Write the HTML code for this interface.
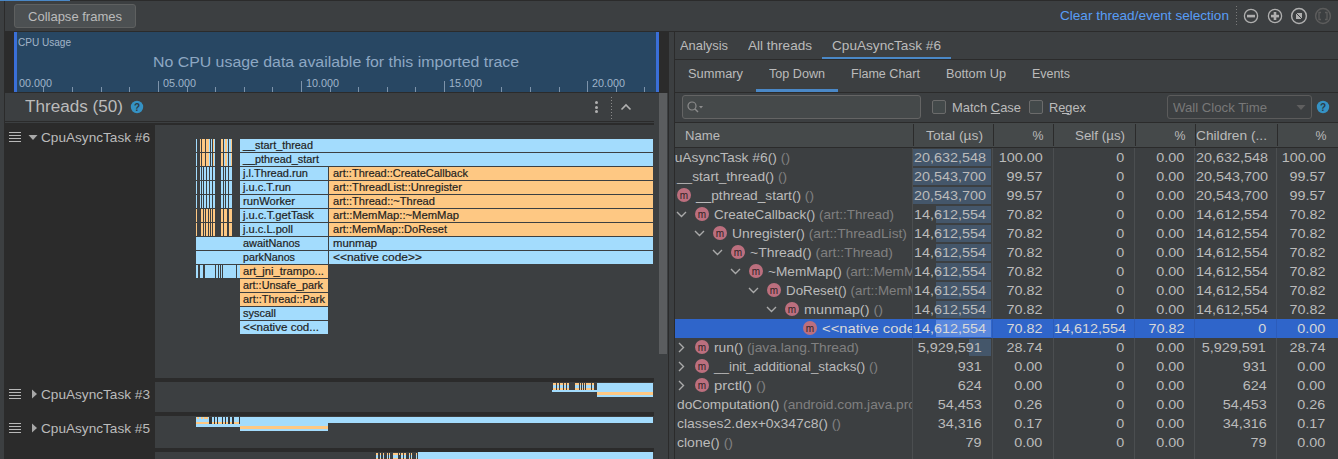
<!DOCTYPE html>
<html><head><meta charset="utf-8">
<style>
*{box-sizing:border-box;margin:0;padding:0}
html,body{width:1338px;height:459px;overflow:hidden;background:#3c3f41;font-family:"Liberation Sans",sans-serif;color:#bbbbbb;position:relative}
.a{position:absolute}
.t{position:absolute;white-space:pre;line-height:1;transform-origin:0 0}
</style></head><body>
<div class="a" style="left:0px;top:0px;width:1338px;height:1px;background:#2b2b2b;"></div>
<div class="a" style="left:0px;top:0px;width:70px;height:1px;background:#4a88c7;"></div>
<div class="a" style="left:4px;top:1px;width:1px;height:458px;background:#2b2b2b;"></div>
<div class="a" style="left:5px;top:31px;width:1333px;height:1px;background:#2b2b2b;"></div>
<div class="a" style="left:14px;top:4px;width:122px;height:24px;background:#4c5052;border:1px solid #5e6060;border-radius:3px;"></div>
<div class="t" style="left:28px;top:10px;font-size:13px;color:#bbbbbb;transform:scaleX(1.0005);">Collapse frames</div>
<div class="a" style="left:5px;top:32px;width:664px;height:61px;background:#2b2b2b;"></div>
<div class="a" style="left:14px;top:32px;width:645px;height:60px;background:#284763;"></div>
<div class="a" style="left:14px;top:32px;width:3px;height:60px;background:#3a6fd8;"></div>
<div class="a" style="left:656px;top:32px;width:3px;height:60px;background:#3a6fd8;"></div>
<div class="a" style="left:5px;top:92px;width:650px;height:1px;background:#2b2b2b;"></div>
<div class="t" style="left:18px;top:37px;font-size:11px;color:#a3b5c8;transform:scaleX(0.9123);">CPU Usage</div>
<div class="t" style="left:153px;top:55px;font-size:14px;color:#8ea8c3;transform:scaleX(1.1337);">No CPU usage data available for this imported trace</div>
<div class="a" style="left:43px;top:87px;width:1px;height:5px;background:#7d93aa;"></div>
<div class="a" style="left:72px;top:87px;width:1px;height:5px;background:#7d93aa;"></div>
<div class="a" style="left:101px;top:87px;width:1px;height:5px;background:#7d93aa;"></div>
<div class="a" style="left:129px;top:87px;width:1px;height:5px;background:#7d93aa;"></div>
<div class="a" style="left:158px;top:81px;width:1px;height:11px;background:#7d93aa;"></div>
<div class="a" style="left:187px;top:87px;width:1px;height:5px;background:#7d93aa;"></div>
<div class="a" style="left:215px;top:87px;width:1px;height:5px;background:#7d93aa;"></div>
<div class="a" style="left:244px;top:87px;width:1px;height:5px;background:#7d93aa;"></div>
<div class="a" style="left:272px;top:87px;width:1px;height:5px;background:#7d93aa;"></div>
<div class="a" style="left:301px;top:81px;width:1px;height:11px;background:#7d93aa;"></div>
<div class="a" style="left:330px;top:87px;width:1px;height:5px;background:#7d93aa;"></div>
<div class="a" style="left:358px;top:87px;width:1px;height:5px;background:#7d93aa;"></div>
<div class="a" style="left:387px;top:87px;width:1px;height:5px;background:#7d93aa;"></div>
<div class="a" style="left:415px;top:87px;width:1px;height:5px;background:#7d93aa;"></div>
<div class="a" style="left:444px;top:81px;width:1px;height:11px;background:#7d93aa;"></div>
<div class="a" style="left:473px;top:87px;width:1px;height:5px;background:#7d93aa;"></div>
<div class="a" style="left:501px;top:87px;width:1px;height:5px;background:#7d93aa;"></div>
<div class="a" style="left:530px;top:87px;width:1px;height:5px;background:#7d93aa;"></div>
<div class="a" style="left:559px;top:87px;width:1px;height:5px;background:#7d93aa;"></div>
<div class="a" style="left:587px;top:81px;width:1px;height:11px;background:#7d93aa;"></div>
<div class="a" style="left:616px;top:87px;width:1px;height:5px;background:#7d93aa;"></div>
<div class="a" style="left:644px;top:87px;width:1px;height:5px;background:#7d93aa;"></div>
<div class="t" style="left:19px;top:78px;font-size:11px;color:#9fb4ca;transform:scaleX(0.9796);">00.000</div>
<div class="t" style="left:163px;top:78px;font-size:11px;color:#9fb4ca;transform:scaleX(0.9796);">05.000</div>
<div class="t" style="left:306px;top:78px;font-size:11px;color:#9fb4ca;transform:scaleX(0.9796);">10.000</div>
<div class="t" style="left:449px;top:78px;font-size:11px;color:#9fb4ca;transform:scaleX(0.9796);">15.000</div>
<div class="t" style="left:592px;top:78px;font-size:11px;color:#9fb4ca;transform:scaleX(0.9796);">20.000</div>
<div class="a" style="left:5px;top:121px;width:649px;height:1px;background:#2b2b2b;"></div>
<div class="a" style="left:5px;top:123px;width:649px;height:1px;background:#2b2b2b;"></div>
<div class="t" style="left:25px;top:99px;font-size:16px;color:#bbbbbb;transform:scaleX(1.0692);">Threads (50)</div>
<svg class="a" style="left:130px;top:100px" width="14" height="14"><circle cx="7" cy="7" r="6.2" fill="#3592c4"/><text x="7" y="11" font-family="Liberation Sans" font-size="10" font-weight="bold" text-anchor="middle" fill="#2b3c48">?</text></svg>
<div class="a" style="left:594.5px;top:100.5px;width:3px;height:3px;border-radius:50%;background:#b0b0b0"></div>
<div class="a" style="left:594.5px;top:105.5px;width:3px;height:3px;border-radius:50%;background:#b0b0b0"></div>
<div class="a" style="left:594.5px;top:109.5px;width:3px;height:3px;border-radius:50%;background:#b0b0b0"></div>
<div class="a" style="left:611px;top:97px;width:1px;height:1px;background:#8a8a8a;"></div>
<div class="a" style="left:611px;top:100px;width:1px;height:1px;background:#8a8a8a;"></div>
<div class="a" style="left:611px;top:103px;width:1px;height:1px;background:#8a8a8a;"></div>
<div class="a" style="left:611px;top:106px;width:1px;height:1px;background:#8a8a8a;"></div>
<div class="a" style="left:611px;top:109px;width:1px;height:1px;background:#8a8a8a;"></div>
<div class="a" style="left:611px;top:112px;width:1px;height:1px;background:#8a8a8a;"></div>
<div class="a" style="left:611px;top:115px;width:1px;height:1px;background:#8a8a8a;"></div>
<div class="a" style="left:611px;top:118px;width:1px;height:1px;background:#8a8a8a;"></div>
<svg class="a" style="left:620px;top:102px" width="12" height="10"><polyline points="1.5,7.5 6,3 10.5,7.5" fill="none" stroke="#b0b0b0" stroke-width="1.6"/></svg>
<div class="a" style="left:5px;top:124px;width:650px;height:335px;background:#2b2b2b;"></div>
<div class="a" style="left:155px;top:125px;width:499px;height:253px;background:#3c3f41;"></div>
<div class="a" style="left:155px;top:382px;width:499px;height:30px;background:#3c3f41;"></div>
<div class="a" style="left:155px;top:416px;width:499px;height:32px;background:#3c3f41;"></div>
<div class="a" style="left:155px;top:452px;width:499px;height:7px;background:#3c3f41;"></div>
<div class="a" style="left:9px;top:132px;width:12px;height:1px;background:#b8b8b8;"></div>
<div class="a" style="left:9px;top:135px;width:12px;height:1px;background:#b8b8b8;"></div>
<div class="a" style="left:9px;top:138px;width:12px;height:1px;background:#b8b8b8;"></div>
<div class="a" style="left:9px;top:141px;width:12px;height:1px;background:#b8b8b8;"></div>
<div class="a" style="left:9px;top:389px;width:12px;height:1px;background:#b8b8b8;"></div>
<div class="a" style="left:9px;top:392px;width:12px;height:1px;background:#b8b8b8;"></div>
<div class="a" style="left:9px;top:395px;width:12px;height:1px;background:#b8b8b8;"></div>
<div class="a" style="left:9px;top:398px;width:12px;height:1px;background:#b8b8b8;"></div>
<div class="a" style="left:9px;top:423px;width:12px;height:1px;background:#b8b8b8;"></div>
<div class="a" style="left:9px;top:426px;width:12px;height:1px;background:#b8b8b8;"></div>
<div class="a" style="left:9px;top:429px;width:12px;height:1px;background:#b8b8b8;"></div>
<div class="a" style="left:9px;top:432px;width:12px;height:1px;background:#b8b8b8;"></div>
<svg class="a" style="left:28px;top:134px" width="10" height="7"><polygon points="0.5,1 9.5,1 5,6" fill="#a8a8a8"/></svg>
<svg class="a" style="left:31px;top:389px" width="7" height="10"><polygon points="1,0.5 6,5 1,9.5" fill="#a8a8a8"/></svg>
<svg class="a" style="left:31px;top:423px" width="7" height="10"><polygon points="1,0.5 6,5 1,9.5" fill="#a8a8a8"/></svg>
<div class="t" style="left:41px;top:131px;font-size:13px;color:#bbbbbb;transform:scaleX(1.0473);">CpuAsyncTask #6</div>
<div class="t" style="left:41px;top:388px;font-size:13px;color:#bbbbbb;transform:scaleX(1.0473);">CpuAsyncTask #3</div>
<div class="t" style="left:41px;top:422px;font-size:13px;color:#bbbbbb;transform:scaleX(1.0473);">CpuAsyncTask #5</div>
<div class="a" style="left:196px;top:139px;width:1px;height:13px;background:#a3dcfd;"></div>
<div class="a" style="left:200px;top:139px;width:1px;height:13px;background:#fec883;"></div>
<div class="a" style="left:202px;top:139px;width:3px;height:13px;background:#fec883;"></div>
<div class="a" style="left:206px;top:139px;width:3px;height:13px;background:#fec883;"></div>
<div class="a" style="left:209px;top:139px;width:1px;height:13px;background:#a3dcfd;"></div>
<div class="a" style="left:211px;top:139px;width:1px;height:13px;background:#a3dcfd;"></div>
<div class="a" style="left:213px;top:139px;width:1px;height:13px;background:#fec883;"></div>
<div class="a" style="left:214px;top:139px;width:1px;height:13px;background:#a3dcfd;"></div>
<div class="a" style="left:221px;top:139px;width:2px;height:13px;background:#fec883;"></div>
<div class="a" style="left:224px;top:139px;width:1px;height:13px;background:#a3dcfd;"></div>
<div class="a" style="left:225px;top:139px;width:2px;height:13px;background:#fec883;"></div>
<div class="a" style="left:227px;top:139px;width:1px;height:13px;background:#a3dcfd;"></div>
<div class="a" style="left:229px;top:139px;width:2px;height:13px;background:#a3dcfd;"></div>
<div class="a" style="left:231px;top:139px;width:1px;height:13px;background:#fec883;"></div>
<div class="a" style="left:196px;top:153px;width:1px;height:13px;background:#a3dcfd;"></div>
<div class="a" style="left:200px;top:153px;width:1px;height:13px;background:#fec883;"></div>
<div class="a" style="left:202px;top:153px;width:3px;height:13px;background:#fec883;"></div>
<div class="a" style="left:206px;top:153px;width:3px;height:13px;background:#fec883;"></div>
<div class="a" style="left:209px;top:153px;width:1px;height:13px;background:#a3dcfd;"></div>
<div class="a" style="left:211px;top:153px;width:1px;height:13px;background:#a3dcfd;"></div>
<div class="a" style="left:213px;top:153px;width:1px;height:13px;background:#fec883;"></div>
<div class="a" style="left:214px;top:153px;width:1px;height:13px;background:#a3dcfd;"></div>
<div class="a" style="left:221px;top:153px;width:2px;height:13px;background:#fec883;"></div>
<div class="a" style="left:224px;top:153px;width:1px;height:13px;background:#a3dcfd;"></div>
<div class="a" style="left:225px;top:153px;width:2px;height:13px;background:#fec883;"></div>
<div class="a" style="left:227px;top:153px;width:1px;height:13px;background:#a3dcfd;"></div>
<div class="a" style="left:229px;top:153px;width:2px;height:13px;background:#a3dcfd;"></div>
<div class="a" style="left:231px;top:153px;width:1px;height:13px;background:#fec883;"></div>
<div class="a" style="left:196px;top:167px;width:1px;height:13px;background:#a3dcfd;"></div>
<div class="a" style="left:200px;top:167px;width:1px;height:13px;background:#a3dcfd;"></div>
<div class="a" style="left:202px;top:167px;width:1px;height:13px;background:#a3dcfd;"></div>
<div class="a" style="left:204px;top:167px;width:2px;height:13px;background:#a3dcfd;"></div>
<div class="a" style="left:207px;top:167px;width:2px;height:13px;background:#a3dcfd;"></div>
<div class="a" style="left:210px;top:167px;width:1px;height:13px;background:#a3dcfd;"></div>
<div class="a" style="left:211px;top:167px;width:1px;height:13px;background:#a3dcfd;"></div>
<div class="a" style="left:213px;top:167px;width:2px;height:13px;background:#a3dcfd;"></div>
<div class="a" style="left:221px;top:167px;width:2px;height:13px;background:#a3dcfd;"></div>
<div class="a" style="left:224px;top:167px;width:1px;height:13px;background:#a3dcfd;"></div>
<div class="a" style="left:226px;top:167px;width:2px;height:13px;background:#a3dcfd;"></div>
<div class="a" style="left:229px;top:167px;width:3px;height:13px;background:#a3dcfd;"></div>
<div class="a" style="left:196px;top:181px;width:1px;height:13px;background:#a3dcfd;"></div>
<div class="a" style="left:200px;top:181px;width:1px;height:13px;background:#a3dcfd;"></div>
<div class="a" style="left:202px;top:181px;width:1px;height:13px;background:#a3dcfd;"></div>
<div class="a" style="left:204px;top:181px;width:2px;height:13px;background:#a3dcfd;"></div>
<div class="a" style="left:207px;top:181px;width:2px;height:13px;background:#a3dcfd;"></div>
<div class="a" style="left:210px;top:181px;width:1px;height:13px;background:#a3dcfd;"></div>
<div class="a" style="left:211px;top:181px;width:1px;height:13px;background:#a3dcfd;"></div>
<div class="a" style="left:213px;top:181px;width:2px;height:13px;background:#a3dcfd;"></div>
<div class="a" style="left:221px;top:181px;width:2px;height:13px;background:#a3dcfd;"></div>
<div class="a" style="left:224px;top:181px;width:1px;height:13px;background:#a3dcfd;"></div>
<div class="a" style="left:226px;top:181px;width:2px;height:13px;background:#a3dcfd;"></div>
<div class="a" style="left:229px;top:181px;width:3px;height:13px;background:#a3dcfd;"></div>
<div class="a" style="left:196px;top:195px;width:1px;height:13px;background:#a3dcfd;"></div>
<div class="a" style="left:200px;top:195px;width:1px;height:13px;background:#a3dcfd;"></div>
<div class="a" style="left:202px;top:195px;width:1px;height:13px;background:#a3dcfd;"></div>
<div class="a" style="left:204px;top:195px;width:2px;height:13px;background:#a3dcfd;"></div>
<div class="a" style="left:207px;top:195px;width:2px;height:13px;background:#a3dcfd;"></div>
<div class="a" style="left:210px;top:195px;width:1px;height:13px;background:#a3dcfd;"></div>
<div class="a" style="left:211px;top:195px;width:1px;height:13px;background:#a3dcfd;"></div>
<div class="a" style="left:213px;top:195px;width:2px;height:13px;background:#a3dcfd;"></div>
<div class="a" style="left:221px;top:195px;width:2px;height:13px;background:#a3dcfd;"></div>
<div class="a" style="left:224px;top:195px;width:1px;height:13px;background:#a3dcfd;"></div>
<div class="a" style="left:226px;top:195px;width:2px;height:13px;background:#a3dcfd;"></div>
<div class="a" style="left:229px;top:195px;width:3px;height:13px;background:#a3dcfd;"></div>
<div class="a" style="left:196px;top:209px;width:1px;height:13px;background:#fec883;"></div>
<div class="a" style="left:201px;top:209px;width:2px;height:13px;background:#fec883;"></div>
<div class="a" style="left:204px;top:209px;width:1px;height:13px;background:#fec883;"></div>
<div class="a" style="left:206px;top:209px;width:2px;height:13px;background:#fec883;"></div>
<div class="a" style="left:209px;top:209px;width:1px;height:13px;background:#fec883;"></div>
<div class="a" style="left:211px;top:209px;width:1px;height:13px;background:#fec883;"></div>
<div class="a" style="left:213px;top:209px;width:2px;height:13px;background:#fec883;"></div>
<div class="a" style="left:221px;top:209px;width:2px;height:13px;background:#fec883;"></div>
<div class="a" style="left:224px;top:209px;width:3px;height:13px;background:#fec883;"></div>
<div class="a" style="left:229px;top:209px;width:3px;height:13px;background:#fec883;"></div>
<div class="a" style="left:196px;top:223px;width:1px;height:13px;background:#fec883;"></div>
<div class="a" style="left:201px;top:223px;width:2px;height:13px;background:#fec883;"></div>
<div class="a" style="left:204px;top:223px;width:1px;height:13px;background:#fec883;"></div>
<div class="a" style="left:206px;top:223px;width:2px;height:13px;background:#fec883;"></div>
<div class="a" style="left:209px;top:223px;width:1px;height:13px;background:#fec883;"></div>
<div class="a" style="left:211px;top:223px;width:1px;height:13px;background:#fec883;"></div>
<div class="a" style="left:213px;top:223px;width:2px;height:13px;background:#fec883;"></div>
<div class="a" style="left:221px;top:223px;width:2px;height:13px;background:#fec883;"></div>
<div class="a" style="left:224px;top:223px;width:3px;height:13px;background:#fec883;"></div>
<div class="a" style="left:229px;top:223px;width:3px;height:13px;background:#fec883;"></div>
<div class="a" style="left:240px;top:139px;width:413px;height:13px;background:#a3dcfd;"></div>
<div class="t" style="left:243px;top:140px;font-size:11px;color:#1e1e1e;transform:scaleX(0.9859);-webkit-text-stroke:0.2px #1e1e1e;">__start_thread</div>
<div class="a" style="left:240px;top:153px;width:413px;height:13px;background:#a3dcfd;"></div>
<div class="t" style="left:243px;top:154px;font-size:11px;color:#1e1e1e;transform:scaleX(0.9854);-webkit-text-stroke:0.2px #1e1e1e;">__pthread_start</div>
<div class="a" style="left:240px;top:167px;width:88px;height:13px;background:#a3dcfd;"></div>
<div class="t" style="left:243px;top:168px;font-size:11px;color:#1e1e1e;transform:scaleX(1.0024);-webkit-text-stroke:0.2px #1e1e1e;">j.l.Thread.run</div>
<div class="a" style="left:329px;top:167px;width:324px;height:13px;background:#fec883;"></div>
<div class="t" style="left:333px;top:168px;font-size:11px;color:#1e1e1e;transform:scaleX(0.9986);-webkit-text-stroke:0.2px #1e1e1e;">art::Thread::CreateCallback</div>
<div class="a" style="left:240px;top:181px;width:88px;height:13px;background:#a3dcfd;"></div>
<div class="t" style="left:243px;top:182px;font-size:11px;color:#1e1e1e;transform:scaleX(1.0059);-webkit-text-stroke:0.2px #1e1e1e;">j.u.c.T.run</div>
<div class="a" style="left:329px;top:181px;width:324px;height:13px;background:#fec883;"></div>
<div class="t" style="left:333px;top:182px;font-size:11px;color:#1e1e1e;transform:scaleX(1.0090);-webkit-text-stroke:0.2px #1e1e1e;">art::ThreadList::Unregister</div>
<div class="a" style="left:240px;top:195px;width:88px;height:13px;background:#a3dcfd;"></div>
<div class="t" style="left:243px;top:196px;font-size:11px;color:#1e1e1e;transform:scaleX(1.0168);-webkit-text-stroke:0.2px #1e1e1e;">runWorker</div>
<div class="a" style="left:329px;top:195px;width:324px;height:13px;background:#fec883;"></div>
<div class="t" style="left:333px;top:196px;font-size:11px;color:#1e1e1e;transform:scaleX(1.0073);-webkit-text-stroke:0.2px #1e1e1e;">art::Thread::~Thread</div>
<div class="a" style="left:240px;top:209px;width:88px;height:13px;background:#a3dcfd;"></div>
<div class="t" style="left:243px;top:210px;font-size:11px;color:#1e1e1e;transform:scaleX(1.0179);-webkit-text-stroke:0.2px #1e1e1e;">j.u.c.T.getTask</div>
<div class="a" style="left:329px;top:209px;width:324px;height:13px;background:#fec883;"></div>
<div class="t" style="left:333px;top:210px;font-size:11px;color:#1e1e1e;transform:scaleX(1.0227);-webkit-text-stroke:0.2px #1e1e1e;">art::MemMap::~MemMap</div>
<div class="a" style="left:240px;top:223px;width:88px;height:13px;background:#a3dcfd;"></div>
<div class="t" style="left:243px;top:224px;font-size:11px;color:#1e1e1e;transform:scaleX(1.0088);-webkit-text-stroke:0.2px #1e1e1e;">j.u.c.L.poll</div>
<div class="a" style="left:329px;top:223px;width:324px;height:13px;background:#fec883;"></div>
<div class="t" style="left:333px;top:224px;font-size:11px;color:#1e1e1e;transform:scaleX(1.0022);-webkit-text-stroke:0.2px #1e1e1e;">art::MemMap::DoReset</div>
<div class="a" style="left:196px;top:237px;width:132px;height:13px;background:#a3dcfd;"></div>
<div class="t" style="left:243px;top:238px;font-size:11px;color:#1e1e1e;transform:scaleX(0.9913);-webkit-text-stroke:0.2px #1e1e1e;">awaitNanos</div>
<div class="a" style="left:329px;top:237px;width:324px;height:13px;background:#a3dcfd;"></div>
<div class="t" style="left:333px;top:238px;font-size:11px;color:#1e1e1e;transform:scaleX(1.0277);-webkit-text-stroke:0.2px #1e1e1e;">munmap</div>
<div class="a" style="left:196px;top:251px;width:132px;height:13px;background:#a3dcfd;"></div>
<div class="t" style="left:243px;top:252px;font-size:11px;color:#1e1e1e;transform:scaleX(0.9771);-webkit-text-stroke:0.2px #1e1e1e;">parkNanos</div>
<div class="a" style="left:329px;top:251px;width:324px;height:13px;background:#a3dcfd;"></div>
<div class="t" style="left:333px;top:252px;font-size:11px;color:#1e1e1e;transform:scaleX(1.0854);-webkit-text-stroke:0.2px #1e1e1e;">&lt;&lt;native code&gt;&gt;</div>
<div class="a" style="left:196px;top:265px;width:2px;height:13px;background:#a3dcfd;"></div>
<div class="a" style="left:200px;top:265px;width:3px;height:13px;background:#a3dcfd;"></div>
<div class="a" style="left:205px;top:265px;width:10px;height:13px;background:#a3dcfd;"></div>
<div class="a" style="left:216px;top:265px;width:2px;height:13px;background:#a3dcfd;"></div>
<div class="a" style="left:219px;top:265px;width:1px;height:13px;background:#a3dcfd;"></div>
<div class="a" style="left:221px;top:265px;width:1px;height:13px;background:#a3dcfd;"></div>
<div class="a" style="left:223px;top:265px;width:13px;height:13px;background:#a3dcfd;"></div>
<div class="a" style="left:237px;top:265px;width:3px;height:13px;background:#a3dcfd;"></div>
<div class="a" style="left:240px;top:265px;width:88px;height:13px;background:#fec883;"></div>
<div class="t" style="left:243px;top:266px;font-size:11px;color:#1e1e1e;transform:scaleX(1.0185);-webkit-text-stroke:0.2px #1e1e1e;">art_jni_trampo...</div>
<div class="a" style="left:240px;top:279px;width:88px;height:13px;background:#fec883;"></div>
<div class="t" style="left:243px;top:280px;font-size:11px;color:#1e1e1e;transform:scaleX(0.9831);-webkit-text-stroke:0.2px #1e1e1e;">art::Unsafe_park</div>
<div class="a" style="left:240px;top:293px;width:88px;height:13px;background:#fec883;"></div>
<div class="t" style="left:243px;top:294px;font-size:11px;color:#1e1e1e;transform:scaleX(0.9928);-webkit-text-stroke:0.2px #1e1e1e;">art::Thread::Park</div>
<div class="a" style="left:240px;top:307px;width:88px;height:13px;background:#a3dcfd;"></div>
<div class="t" style="left:243px;top:308px;font-size:11px;color:#1e1e1e;transform:scaleX(1.0000);-webkit-text-stroke:0.2px #1e1e1e;">syscall</div>
<div class="a" style="left:240px;top:321px;width:88px;height:13px;background:#a3dcfd;"></div>
<div class="t" style="left:243px;top:322px;font-size:11px;color:#1e1e1e;transform:scaleX(1.0524);-webkit-text-stroke:0.2px #1e1e1e;">&lt;&lt;native cod...</div>
<div class="a" style="left:597px;top:383px;width:56px;height:9px;background:#a3dcfd;"></div>
<div class="a" style="left:597px;top:392px;width:56px;height:3px;background:#fec883;"></div>
<div class="a" style="left:597px;top:395px;width:56px;height:2px;background:#a3dcfd;"></div>
<div class="a" style="left:553px;top:383px;width:3px;height:2px;background:#fec883;"></div>
<div class="a" style="left:553px;top:385px;width:3px;height:3px;background:#a3dcfd;"></div>
<div class="a" style="left:553px;top:388px;width:3px;height:2px;background:#fec883;"></div>
<div class="a" style="left:557px;top:383px;width:2px;height:2px;background:#fec883;"></div>
<div class="a" style="left:557px;top:385px;width:2px;height:3px;background:#a3dcfd;"></div>
<div class="a" style="left:557px;top:388px;width:2px;height:2px;background:#fec883;"></div>
<div class="a" style="left:560px;top:383px;width:3px;height:2px;background:#fec883;"></div>
<div class="a" style="left:560px;top:385px;width:3px;height:3px;background:#a3dcfd;"></div>
<div class="a" style="left:560px;top:388px;width:3px;height:2px;background:#fec883;"></div>
<div class="a" style="left:564px;top:383px;width:2px;height:2px;background:#fec883;"></div>
<div class="a" style="left:564px;top:385px;width:2px;height:3px;background:#a3dcfd;"></div>
<div class="a" style="left:564px;top:388px;width:2px;height:2px;background:#fec883;"></div>
<div class="a" style="left:567px;top:383px;width:2px;height:2px;background:#fec883;"></div>
<div class="a" style="left:567px;top:385px;width:2px;height:3px;background:#a3dcfd;"></div>
<div class="a" style="left:567px;top:388px;width:2px;height:2px;background:#fec883;"></div>
<div class="a" style="left:575px;top:383px;width:4px;height:2px;background:#fec883;"></div>
<div class="a" style="left:575px;top:385px;width:4px;height:3px;background:#a3dcfd;"></div>
<div class="a" style="left:575px;top:388px;width:4px;height:2px;background:#fec883;"></div>
<div class="a" style="left:580px;top:383px;width:1px;height:2px;background:#fec883;"></div>
<div class="a" style="left:580px;top:385px;width:1px;height:3px;background:#a3dcfd;"></div>
<div class="a" style="left:580px;top:388px;width:1px;height:2px;background:#fec883;"></div>
<div class="a" style="left:582px;top:383px;width:1px;height:2px;background:#fec883;"></div>
<div class="a" style="left:582px;top:385px;width:1px;height:3px;background:#a3dcfd;"></div>
<div class="a" style="left:582px;top:388px;width:1px;height:2px;background:#fec883;"></div>
<div class="a" style="left:584px;top:383px;width:1px;height:2px;background:#fec883;"></div>
<div class="a" style="left:584px;top:385px;width:1px;height:3px;background:#a3dcfd;"></div>
<div class="a" style="left:584px;top:388px;width:1px;height:2px;background:#fec883;"></div>
<div class="a" style="left:586px;top:383px;width:5px;height:2px;background:#fec883;"></div>
<div class="a" style="left:586px;top:385px;width:5px;height:3px;background:#a3dcfd;"></div>
<div class="a" style="left:586px;top:388px;width:5px;height:2px;background:#fec883;"></div>
<div class="a" style="left:592px;top:383px;width:2px;height:2px;background:#fec883;"></div>
<div class="a" style="left:592px;top:385px;width:2px;height:3px;background:#a3dcfd;"></div>
<div class="a" style="left:592px;top:388px;width:2px;height:2px;background:#fec883;"></div>
<div class="a" style="left:552px;top:390px;width:45px;height:2px;background:#a3dcfd;"></div>
<div class="a" style="left:196px;top:417px;width:457px;height:6px;background:#a3dcfd;"></div>
<div class="a" style="left:196px;top:423px;width:44px;height:4px;background:#a3dcfd;"></div>
<div class="a" style="left:240px;top:423px;width:88px;height:8px;background:#a3dcfd;"></div>
<div class="a" style="left:240px;top:426px;width:88px;height:3px;background:#fec883;"></div>
<div class="a" style="left:196px;top:422px;width:13px;height:2px;background:#fec883;"></div>
<div class="a" style="left:197px;top:417px;width:2px;height:2px;background:#fec883;"></div>
<div class="a" style="left:201px;top:417px;width:2px;height:2px;background:#fec883;"></div>
<div class="a" style="left:204px;top:417px;width:4px;height:2px;background:#fec883;"></div>
<div class="a" style="left:209px;top:417px;width:31px;height:7px;background:#333537;"></div>
<div class="a" style="left:212px;top:417px;width:2px;height:5px;background:#a3dcfd;"></div>
<div class="a" style="left:212px;top:422px;width:2px;height:2px;background:#fec883;"></div>
<div class="a" style="left:215px;top:417px;width:2px;height:5px;background:#a3dcfd;"></div>
<div class="a" style="left:215px;top:422px;width:2px;height:2px;background:#fec883;"></div>
<div class="a" style="left:218px;top:417px;width:2px;height:5px;background:#a3dcfd;"></div>
<div class="a" style="left:218px;top:422px;width:2px;height:2px;background:#fec883;"></div>
<div class="a" style="left:220px;top:417px;width:2px;height:5px;background:#a3dcfd;"></div>
<div class="a" style="left:220px;top:422px;width:2px;height:2px;background:#fec883;"></div>
<div class="a" style="left:223px;top:417px;width:2px;height:5px;background:#a3dcfd;"></div>
<div class="a" style="left:223px;top:422px;width:2px;height:2px;background:#fec883;"></div>
<div class="a" style="left:226px;top:417px;width:2px;height:5px;background:#a3dcfd;"></div>
<div class="a" style="left:226px;top:422px;width:2px;height:2px;background:#fec883;"></div>
<div class="a" style="left:230px;top:417px;width:2px;height:5px;background:#a3dcfd;"></div>
<div class="a" style="left:230px;top:422px;width:2px;height:2px;background:#fec883;"></div>
<div class="a" style="left:234px;top:417px;width:2px;height:5px;background:#a3dcfd;"></div>
<div class="a" style="left:234px;top:422px;width:2px;height:2px;background:#fec883;"></div>
<div class="a" style="left:236px;top:417px;width:3px;height:5px;background:#a3dcfd;"></div>
<div class="a" style="left:236px;top:422px;width:3px;height:2px;background:#fec883;"></div>
<div class="a" style="left:418px;top:452px;width:235px;height:7px;background:#a3dcfd;"></div>
<div class="a" style="left:376px;top:453px;width:2px;height:2px;background:#fec883;"></div>
<div class="a" style="left:376px;top:455px;width:2px;height:3px;background:#a3dcfd;"></div>
<div class="a" style="left:376px;top:458px;width:2px;height:1px;background:#fec883;"></div>
<div class="a" style="left:380px;top:453px;width:1px;height:2px;background:#fec883;"></div>
<div class="a" style="left:380px;top:455px;width:1px;height:3px;background:#a3dcfd;"></div>
<div class="a" style="left:380px;top:458px;width:1px;height:1px;background:#fec883;"></div>
<div class="a" style="left:383px;top:453px;width:1px;height:2px;background:#fec883;"></div>
<div class="a" style="left:383px;top:455px;width:1px;height:3px;background:#a3dcfd;"></div>
<div class="a" style="left:383px;top:458px;width:1px;height:1px;background:#fec883;"></div>
<div class="a" style="left:387px;top:453px;width:1px;height:2px;background:#fec883;"></div>
<div class="a" style="left:387px;top:455px;width:1px;height:3px;background:#a3dcfd;"></div>
<div class="a" style="left:387px;top:458px;width:1px;height:1px;background:#fec883;"></div>
<div class="a" style="left:389px;top:453px;width:1px;height:2px;background:#fec883;"></div>
<div class="a" style="left:389px;top:455px;width:1px;height:3px;background:#a3dcfd;"></div>
<div class="a" style="left:389px;top:458px;width:1px;height:1px;background:#fec883;"></div>
<div class="a" style="left:393px;top:453px;width:5px;height:2px;background:#fec883;"></div>
<div class="a" style="left:393px;top:455px;width:5px;height:3px;background:#a3dcfd;"></div>
<div class="a" style="left:393px;top:458px;width:5px;height:1px;background:#fec883;"></div>
<div class="a" style="left:401px;top:453px;width:2px;height:2px;background:#fec883;"></div>
<div class="a" style="left:401px;top:455px;width:2px;height:3px;background:#a3dcfd;"></div>
<div class="a" style="left:401px;top:458px;width:2px;height:1px;background:#fec883;"></div>
<div class="a" style="left:404px;top:453px;width:2px;height:2px;background:#fec883;"></div>
<div class="a" style="left:404px;top:455px;width:2px;height:3px;background:#a3dcfd;"></div>
<div class="a" style="left:404px;top:458px;width:2px;height:1px;background:#fec883;"></div>
<div class="a" style="left:409px;top:453px;width:1px;height:2px;background:#fec883;"></div>
<div class="a" style="left:409px;top:455px;width:1px;height:3px;background:#a3dcfd;"></div>
<div class="a" style="left:409px;top:458px;width:1px;height:1px;background:#fec883;"></div>
<div class="a" style="left:411px;top:453px;width:1px;height:2px;background:#fec883;"></div>
<div class="a" style="left:411px;top:455px;width:1px;height:3px;background:#a3dcfd;"></div>
<div class="a" style="left:411px;top:458px;width:1px;height:1px;background:#fec883;"></div>
<div class="a" style="left:416px;top:453px;width:1px;height:2px;background:#fec883;"></div>
<div class="a" style="left:416px;top:455px;width:1px;height:3px;background:#a3dcfd;"></div>
<div class="a" style="left:416px;top:458px;width:1px;height:1px;background:#fec883;"></div>
<div class="a" style="left:399px;top:453px;width:1px;height:2px;background:#fec883;"></div>
<div class="a" style="left:654px;top:93px;width:5px;height:366px;background:#3c3f41;"></div>
<div class="a" style="left:659px;top:32px;width:9px;height:61px;background:#2b2b2b;"></div>
<div class="a" style="left:659px;top:93px;width:8px;height:261px;background:#5b5d5f;"></div>
<div class="a" style="left:659px;top:354px;width:9px;height:105px;background:#3c3f41;"></div>
<div class="a" style="left:668px;top:32px;width:1px;height:427px;background:#2b2b2b;"></div>
<div class="a" style="left:669px;top:32px;width:5px;height:427px;background:#3c3f41;"></div>
<div class="a" style="left:674px;top:32px;width:1px;height:427px;background:#2b2b2b;"></div>
<div class="t" style="left:1060px;top:9px;font-size:13px;color:#589df6;transform:scaleX(1.0437);">Clear thread/event selection</div>
<div class="a" style="left:1236px;top:6px;width:1px;height:1px;background:#7a7a7a;"></div>
<div class="a" style="left:1236px;top:9px;width:1px;height:1px;background:#7a7a7a;"></div>
<div class="a" style="left:1236px;top:12px;width:1px;height:1px;background:#7a7a7a;"></div>
<div class="a" style="left:1236px;top:15px;width:1px;height:1px;background:#7a7a7a;"></div>
<div class="a" style="left:1236px;top:18px;width:1px;height:1px;background:#7a7a7a;"></div>
<div class="a" style="left:1236px;top:21px;width:1px;height:1px;background:#7a7a7a;"></div>
<div class="a" style="left:1236px;top:24px;width:1px;height:1px;background:#7a7a7a;"></div>
<svg class="a" style="left:1242px;top:7px" width="96" height="18"><circle cx="9" cy="9" r="6.6" fill="none" stroke="#afafaf" stroke-width="1.3"/><rect x="5" y="7.8" width="8" height="2.6" fill="#afafaf"/><circle cx="33" cy="9" r="6.6" fill="none" stroke="#afafaf" stroke-width="1.3"/><rect x="29" y="7.8" width="8" height="2.6" fill="#afafaf"/><rect x="31.7" y="5" width="2.6" height="8" fill="#afafaf"/><circle cx="57" cy="9" r="7.4" fill="none" stroke="#afafaf" stroke-width="1.5"/><polygon points="54,6 60,6 60,12 54,12" fill="#afafaf"/><line x1="53.5" y1="5.5" x2="60.5" y2="12.5" stroke="#3c3f41" stroke-width="1"/><circle cx="81" cy="9" r="7.4" fill="none" stroke="#5c5c5c" stroke-width="1.5"/><path d="M79,5.5 h-2 v7 h2 M83,5.5 h2 v7 h-2" fill="none" stroke="#5c5c5c" stroke-width="1.3"/></svg>
<div class="t" style="left:680px;top:39px;font-size:13px;color:#bbbbbb;transform:scaleX(0.9913);">Analysis</div>
<div class="t" style="left:748px;top:39px;font-size:13px;color:#bbbbbb;transform:scaleX(1.0417);">All threads</div>
<div class="t" style="left:832px;top:39px;font-size:13px;color:#bbbbbb;transform:scaleX(1.0473);">CpuAsyncTask #6</div>
<div class="a" style="left:822px;top:57px;width:129px;height:2px;background:#4a88c7;"></div>
<div class="a" style="left:675px;top:59px;width:663px;height:1px;background:#2b2b2b;"></div>
<div class="t" style="left:688px;top:68px;font-size:12px;color:#bbbbbb;transform:scaleX(1.0712);">Summary</div>
<div class="t" style="left:769px;top:68px;font-size:12px;color:#bbbbbb;transform:scaleX(1.0495);">Top Down</div>
<div class="t" style="left:851px;top:68px;font-size:12px;color:#bbbbbb;transform:scaleX(1.0452);">Flame Chart</div>
<div class="t" style="left:946px;top:68px;font-size:12px;color:#bbbbbb;transform:scaleX(1.0587);">Bottom Up</div>
<div class="t" style="left:1032px;top:68px;font-size:12px;color:#bbbbbb;transform:scaleX(1.0362);">Events</div>
<div class="a" style="left:756px;top:89px;width:82px;height:3px;background:#4a88c7;"></div>
<div class="a" style="left:675px;top:92px;width:663px;height:1px;background:#2b2b2b;"></div>
<div class="a" style="left:682px;top:95px;width:239px;height:24px;background:#45494a;border:1px solid #646464;border-radius:3px;"></div>
<svg class="a" style="left:686px;top:100px" width="20" height="14"><circle cx="6" cy="6" r="4" fill="none" stroke="#8c8c8c" stroke-width="1.2"/><line x1="9" y1="9" x2="12" y2="12" stroke="#8c8c8c" stroke-width="1.4"/><polygon points="13,6 17,6 15,8.5" fill="#8c8c8c"/></svg>
<div class="a" style="left:932px;top:100px;width:14px;height:14px;background:#43494a;border:1px solid #6b6b6b;border-radius:2px;"></div>
<div class="t" style="left:952px;top:101px;font-size:13px;color:#bbbbbb;transform:scaleX(0.9946);">Match <span style="text-decoration:underline">C</span>ase</div>
<div class="a" style="left:1029px;top:100px;width:14px;height:14px;background:#43494a;border:1px solid #6b6b6b;border-radius:2px;"></div>
<div class="t" style="left:1049px;top:101px;font-size:13px;color:#bbbbbb;transform:scaleX(0.9842);">Regex</div>
<div class="a" style="left:1062px;top:113px;width:7px;height:1px;background:#bbbbbb;"></div>
<div class="a" style="left:1167px;top:95px;width:145px;height:24px;background:#3c3f41;border:1px solid #5b5b5b;border-radius:3px;"></div>
<div class="t" style="left:1173px;top:101px;font-size:13px;color:#787878;transform:scaleX(1.0140);">Wall Clock Time</div>
<svg class="a" style="left:1296px;top:104px" width="10" height="7"><polygon points="0.5,1 9.5,1 5,6" fill="#5f5f5f"/></svg>
<svg class="a" style="left:1316px;top:100px" width="14" height="14"><circle cx="7" cy="7" r="6.2" fill="#3592c4"/><text x="7" y="11" font-family="Liberation Sans" font-size="10" font-weight="bold" text-anchor="middle" fill="#2b3c48">?</text></svg>
<div class="a" style="left:675px;top:122px;width:663px;height:1px;background:#2b2b2b;"></div>
<div class="a" style="left:675px;top:123px;width:663px;height:24px;background:#45494a;"></div>
<div class="a" style="left:675px;top:147px;width:663px;height:1px;background:#2b2b2b;"></div>
<div class="a" style="left:913px;top:124px;width:1px;height:22px;background:#2b2b2b;"></div>
<div class="a" style="left:993px;top:124px;width:1px;height:22px;background:#2b2b2b;"></div>
<div class="a" style="left:1053px;top:124px;width:1px;height:22px;background:#2b2b2b;"></div>
<div class="a" style="left:1135px;top:124px;width:1px;height:22px;background:#2b2b2b;"></div>
<div class="a" style="left:1195px;top:124px;width:1px;height:22px;background:#2b2b2b;"></div>
<div class="a" style="left:1277px;top:124px;width:1px;height:22px;background:#2b2b2b;"></div>
<div class="t" style="left:685px;top:129px;font-size:13px;color:#bbbbbb;transform:scaleX(1.0090);">Name</div>
<div class="t" style="left:926px;top:129px;font-size:13px;color:#bbbbbb;transform:scaleX(1.0611);">Total (µs)</div>
<div class="t" style="left:1031.94px;top:129px;font-size:13px;color:#bbbbbb;transform-origin:100% 0;transform:scaleX(0.9514);">%</div>
<div class="t" style="left:1075px;top:129px;font-size:13px;color:#bbbbbb;transform:scaleX(1.0276);">Self (µs)</div>
<div class="t" style="left:1173.94px;top:129px;font-size:13px;color:#bbbbbb;transform-origin:100% 0;transform:scaleX(0.9514);">%</div>
<div class="t" style="left:1196px;top:129px;font-size:13px;color:#bbbbbb;transform:scaleX(1.0565);">Children (...</div>
<div class="t" style="left:1315.44px;top:129px;font-size:13px;color:#bbbbbb;transform-origin:100% 0;transform:scaleX(0.9514);">%</div>
<div class="a" style="left:675px;top:148px;width:663px;height:311px;overflow:hidden">
<div class="a" style="left:238px;top:1px;width:78px;height:17px;background:#44566a;"></div>
<div class="a" style="left:238px;top:20px;width:78px;height:17px;background:#44566a;"></div>
<div class="a" style="left:238px;top:39px;width:78px;height:17px;background:#44566a;"></div>
<div class="a" style="left:261px;top:58px;width:55px;height:17px;background:#44566a;"></div>
<div class="a" style="left:261px;top:77px;width:55px;height:17px;background:#44566a;"></div>
<div class="a" style="left:261px;top:96px;width:55px;height:17px;background:#44566a;"></div>
<div class="a" style="left:261px;top:115px;width:55px;height:17px;background:#44566a;"></div>
<div class="a" style="left:261px;top:134px;width:55px;height:17px;background:#44566a;"></div>
<div class="a" style="left:261px;top:153px;width:55px;height:17px;background:#44566a;"></div>
<div class="a" style="left:0px;top:171px;width:663px;height:19px;background:#2f65ca;"></div>
<div class="a" style="left:261px;top:172px;width:55px;height:17px;background:#5a88de;"></div>
<div class="a" style="left:294px;top:191px;width:22px;height:17px;background:#44566a;"></div>
<div class="a" style="left:237px;top:0px;width:1px;height:171px;background:#4b4e50;"></div>
<div class="a" style="left:237px;top:171px;width:1px;height:19px;background:#2c5cba;"></div>
<div class="a" style="left:237px;top:190px;width:1px;height:121px;background:#4b4e50;"></div>
<div class="a" style="left:317px;top:0px;width:1px;height:171px;background:#4b4e50;"></div>
<div class="a" style="left:317px;top:171px;width:1px;height:19px;background:#2c5cba;"></div>
<div class="a" style="left:317px;top:190px;width:1px;height:121px;background:#4b4e50;"></div>
<div class="a" style="left:378px;top:0px;width:1px;height:171px;background:#4b4e50;"></div>
<div class="a" style="left:378px;top:171px;width:1px;height:19px;background:#2c5cba;"></div>
<div class="a" style="left:378px;top:190px;width:1px;height:121px;background:#4b4e50;"></div>
<div class="a" style="left:459px;top:0px;width:1px;height:171px;background:#4b4e50;"></div>
<div class="a" style="left:459px;top:171px;width:1px;height:19px;background:#2c5cba;"></div>
<div class="a" style="left:459px;top:190px;width:1px;height:121px;background:#4b4e50;"></div>
<div class="a" style="left:519px;top:0px;width:1px;height:171px;background:#4b4e50;"></div>
<div class="a" style="left:519px;top:171px;width:1px;height:19px;background:#2c5cba;"></div>
<div class="a" style="left:519px;top:190px;width:1px;height:121px;background:#4b4e50;"></div>
<div class="a" style="left:601px;top:0px;width:1px;height:171px;background:#4b4e50;"></div>
<div class="a" style="left:601px;top:171px;width:1px;height:19px;background:#2c5cba;"></div>
<div class="a" style="left:601px;top:190px;width:1px;height:121px;background:#4b4e50;"></div>
<div class="a" style="left:0;top:0px;width:237px;height:19px;overflow:hidden"><div class="t" style="left:-18px;top:3px;font-size:13px;color:#bbbbbb;transform:scaleX(1.0640)">CpuAsyncTask #6()<span style="color:#808080"> ()</span></div></div>
<div class="t" style="left:239.00px;top:3px;font-size:13px;color:#bbbbbb;transform:scaleX(1.1061)">20,632,548</div>
<div class="t" style="left:327.52px;top:3px;font-size:13px;color:#bbbbbb;transform-origin:100% 0;transform:scaleX(1.1060)">100.00</div>
<div class="t" style="left:442.07px;top:3px;font-size:13px;color:#bbbbbb;transform-origin:100% 0;transform:scaleX(1.1058)">0</div>
<div class="t" style="left:483.99px;top:3px;font-size:13px;color:#bbbbbb;transform-origin:100% 0;transform:scaleX(1.1062)">0.00</div>
<div class="t" style="left:521.00px;top:3px;font-size:13px;color:#bbbbbb;transform:scaleX(1.1061)">20,632,548</div>
<div class="t" style="left:611.02px;top:3px;font-size:13px;color:#bbbbbb;transform-origin:100% 0;transform:scaleX(1.1060)">100.00</div>
<div class="a" style="left:0;top:19px;width:237px;height:19px;overflow:hidden"><div class="t" style="left:2px;top:3px;font-size:13px;color:#bbbbbb;transform:scaleX(1.0498)">__start_thread()<span style="color:#808080"> ()</span></div></div>
<div class="t" style="left:239.00px;top:22px;font-size:13px;color:#bbbbbb;transform:scaleX(1.1061)">20,543,700</div>
<div class="t" style="left:334.75px;top:22px;font-size:13px;color:#bbbbbb;transform-origin:100% 0;transform:scaleX(1.1061)">99.57</div>
<div class="t" style="left:442.07px;top:22px;font-size:13px;color:#bbbbbb;transform-origin:100% 0;transform:scaleX(1.1058)">0</div>
<div class="t" style="left:483.99px;top:22px;font-size:13px;color:#bbbbbb;transform-origin:100% 0;transform:scaleX(1.1062)">0.00</div>
<div class="t" style="left:521.00px;top:22px;font-size:13px;color:#bbbbbb;transform:scaleX(1.1061)">20,543,700</div>
<div class="t" style="left:618.25px;top:22px;font-size:13px;color:#bbbbbb;transform-origin:100% 0;transform:scaleX(1.1061)">99.57</div>
<div class="a" style="left:2px;top:40px;width:14px;height:14px;border-radius:50%;background:#bc6f7e"></div>
<div class="t" style="left:2px;top:43px;width:14px;text-align:center;font-size:10px;color:#2f2326">m</div>
<div class="a" style="left:0;top:38px;width:237px;height:19px;overflow:hidden"><div class="t" style="left:21px;top:3px;font-size:13px;color:#bbbbbb;transform:scaleX(1.0534)">__pthread_start()<span style="color:#808080"> ()</span></div></div>
<div class="t" style="left:239.00px;top:41px;font-size:13px;color:#bbbbbb;transform:scaleX(1.1061)">20,543,700</div>
<div class="t" style="left:334.75px;top:41px;font-size:13px;color:#bbbbbb;transform-origin:100% 0;transform:scaleX(1.1061)">99.57</div>
<div class="t" style="left:442.07px;top:41px;font-size:13px;color:#bbbbbb;transform-origin:100% 0;transform:scaleX(1.1058)">0</div>
<div class="t" style="left:483.99px;top:41px;font-size:13px;color:#bbbbbb;transform-origin:100% 0;transform:scaleX(1.1062)">0.00</div>
<div class="t" style="left:521.00px;top:41px;font-size:13px;color:#bbbbbb;transform:scaleX(1.1061)">20,543,700</div>
<div class="t" style="left:618.25px;top:41px;font-size:13px;color:#bbbbbb;transform-origin:100% 0;transform:scaleX(1.1061)">99.57</div>
<div class="a" style="left:20px;top:59px;width:14px;height:14px;border-radius:50%;background:#bc6f7e"></div>
<div class="t" style="left:20px;top:62px;width:14px;text-align:center;font-size:10px;color:#2f2326">m</div>
<svg class="a" style="left:1px;top:63px" width="11" height="7"><polyline points="1,1 5.5,5.5 10,1" fill="none" stroke="#aaaaaa" stroke-width="1.4"/></svg>
<div class="a" style="left:0;top:57px;width:237px;height:19px;overflow:hidden"><div class="t" style="left:39px;top:3px;font-size:13px;color:#bbbbbb;transform:scaleX(1.0379)">CreateCallback()<span style="color:#808080"> (art::Thread)</span></div></div>
<div class="t" style="left:239.00px;top:60px;font-size:13px;color:#bbbbbb;transform:scaleX(1.1061)">14,612,554</div>
<div class="t" style="left:334.75px;top:60px;font-size:13px;color:#bbbbbb;transform-origin:100% 0;transform:scaleX(1.1061)">70.82</div>
<div class="t" style="left:442.07px;top:60px;font-size:13px;color:#bbbbbb;transform-origin:100% 0;transform:scaleX(1.1058)">0</div>
<div class="t" style="left:483.99px;top:60px;font-size:13px;color:#bbbbbb;transform-origin:100% 0;transform:scaleX(1.1062)">0.00</div>
<div class="t" style="left:521.00px;top:60px;font-size:13px;color:#bbbbbb;transform:scaleX(1.1061)">14,612,554</div>
<div class="t" style="left:618.25px;top:60px;font-size:13px;color:#bbbbbb;transform-origin:100% 0;transform:scaleX(1.1061)">70.82</div>
<div class="a" style="left:38px;top:78px;width:14px;height:14px;border-radius:50%;background:#bc6f7e"></div>
<div class="t" style="left:38px;top:81px;width:14px;text-align:center;font-size:10px;color:#2f2326">m</div>
<svg class="a" style="left:19px;top:82px" width="11" height="7"><polyline points="1,1 5.5,5.5 10,1" fill="none" stroke="#aaaaaa" stroke-width="1.4"/></svg>
<div class="a" style="left:0;top:76px;width:237px;height:19px;overflow:hidden"><div class="t" style="left:57px;top:3px;font-size:13px;color:#bbbbbb;transform:scaleX(1.0623)">Unregister()<span style="color:#808080"> (art::ThreadList)</span></div></div>
<div class="t" style="left:239.00px;top:79px;font-size:13px;color:#bbbbbb;transform:scaleX(1.1061)">14,612,554</div>
<div class="t" style="left:334.75px;top:79px;font-size:13px;color:#bbbbbb;transform-origin:100% 0;transform:scaleX(1.1061)">70.82</div>
<div class="t" style="left:442.07px;top:79px;font-size:13px;color:#bbbbbb;transform-origin:100% 0;transform:scaleX(1.1058)">0</div>
<div class="t" style="left:483.99px;top:79px;font-size:13px;color:#bbbbbb;transform-origin:100% 0;transform:scaleX(1.1062)">0.00</div>
<div class="t" style="left:521.00px;top:79px;font-size:13px;color:#bbbbbb;transform:scaleX(1.1061)">14,612,554</div>
<div class="t" style="left:618.25px;top:79px;font-size:13px;color:#bbbbbb;transform-origin:100% 0;transform:scaleX(1.1061)">70.82</div>
<div class="a" style="left:56px;top:97px;width:14px;height:14px;border-radius:50%;background:#bc6f7e"></div>
<div class="t" style="left:56px;top:100px;width:14px;text-align:center;font-size:10px;color:#2f2326">m</div>
<svg class="a" style="left:37px;top:101px" width="11" height="7"><polyline points="1,1 5.5,5.5 10,1" fill="none" stroke="#aaaaaa" stroke-width="1.4"/></svg>
<div class="a" style="left:0;top:95px;width:237px;height:19px;overflow:hidden"><div class="t" style="left:75px;top:3px;font-size:13px;color:#bbbbbb;transform:scaleX(1.0727)">~Thread()<span style="color:#808080"> (art::Thread)</span></div></div>
<div class="t" style="left:239.00px;top:98px;font-size:13px;color:#bbbbbb;transform:scaleX(1.1061)">14,612,554</div>
<div class="t" style="left:334.75px;top:98px;font-size:13px;color:#bbbbbb;transform-origin:100% 0;transform:scaleX(1.1061)">70.82</div>
<div class="t" style="left:442.07px;top:98px;font-size:13px;color:#bbbbbb;transform-origin:100% 0;transform:scaleX(1.1058)">0</div>
<div class="t" style="left:483.99px;top:98px;font-size:13px;color:#bbbbbb;transform-origin:100% 0;transform:scaleX(1.1062)">0.00</div>
<div class="t" style="left:521.00px;top:98px;font-size:13px;color:#bbbbbb;transform:scaleX(1.1061)">14,612,554</div>
<div class="t" style="left:618.25px;top:98px;font-size:13px;color:#bbbbbb;transform-origin:100% 0;transform:scaleX(1.1061)">70.82</div>
<div class="a" style="left:74px;top:116px;width:14px;height:14px;border-radius:50%;background:#bc6f7e"></div>
<div class="t" style="left:74px;top:119px;width:14px;text-align:center;font-size:10px;color:#2f2326">m</div>
<svg class="a" style="left:55px;top:120px" width="11" height="7"><polyline points="1,1 5.5,5.5 10,1" fill="none" stroke="#aaaaaa" stroke-width="1.4"/></svg>
<div class="a" style="left:0;top:114px;width:237px;height:19px;overflow:hidden"><div class="t" style="left:93px;top:3px;font-size:13px;color:#bbbbbb;transform:scaleX(1.0485)">~MemMap()<span style="color:#808080"> (art::MemMap)</span></div></div>
<div class="t" style="left:239.00px;top:117px;font-size:13px;color:#bbbbbb;transform:scaleX(1.1061)">14,612,554</div>
<div class="t" style="left:334.75px;top:117px;font-size:13px;color:#bbbbbb;transform-origin:100% 0;transform:scaleX(1.1061)">70.82</div>
<div class="t" style="left:442.07px;top:117px;font-size:13px;color:#bbbbbb;transform-origin:100% 0;transform:scaleX(1.1058)">0</div>
<div class="t" style="left:483.99px;top:117px;font-size:13px;color:#bbbbbb;transform-origin:100% 0;transform:scaleX(1.1062)">0.00</div>
<div class="t" style="left:521.00px;top:117px;font-size:13px;color:#bbbbbb;transform:scaleX(1.1061)">14,612,554</div>
<div class="t" style="left:618.25px;top:117px;font-size:13px;color:#bbbbbb;transform-origin:100% 0;transform:scaleX(1.1061)">70.82</div>
<div class="a" style="left:92px;top:135px;width:14px;height:14px;border-radius:50%;background:#bc6f7e"></div>
<div class="t" style="left:92px;top:138px;width:14px;text-align:center;font-size:10px;color:#2f2326">m</div>
<svg class="a" style="left:73px;top:139px" width="11" height="7"><polyline points="1,1 5.5,5.5 10,1" fill="none" stroke="#aaaaaa" stroke-width="1.4"/></svg>
<div class="a" style="left:0;top:133px;width:237px;height:19px;overflow:hidden"><div class="t" style="left:111px;top:3px;font-size:13px;color:#bbbbbb;transform:scaleX(1.0264)">DoReset()<span style="color:#808080"> (art::MemMap)</span></div></div>
<div class="t" style="left:239.00px;top:136px;font-size:13px;color:#bbbbbb;transform:scaleX(1.1061)">14,612,554</div>
<div class="t" style="left:334.75px;top:136px;font-size:13px;color:#bbbbbb;transform-origin:100% 0;transform:scaleX(1.1061)">70.82</div>
<div class="t" style="left:442.07px;top:136px;font-size:13px;color:#bbbbbb;transform-origin:100% 0;transform:scaleX(1.1058)">0</div>
<div class="t" style="left:483.99px;top:136px;font-size:13px;color:#bbbbbb;transform-origin:100% 0;transform:scaleX(1.1062)">0.00</div>
<div class="t" style="left:521.00px;top:136px;font-size:13px;color:#bbbbbb;transform:scaleX(1.1061)">14,612,554</div>
<div class="t" style="left:618.25px;top:136px;font-size:13px;color:#bbbbbb;transform-origin:100% 0;transform:scaleX(1.1061)">70.82</div>
<div class="a" style="left:110px;top:154px;width:14px;height:14px;border-radius:50%;background:#bc6f7e"></div>
<div class="t" style="left:110px;top:157px;width:14px;text-align:center;font-size:10px;color:#2f2326">m</div>
<svg class="a" style="left:91px;top:158px" width="11" height="7"><polyline points="1,1 5.5,5.5 10,1" fill="none" stroke="#aaaaaa" stroke-width="1.4"/></svg>
<div class="a" style="left:0;top:152px;width:237px;height:19px;overflow:hidden"><div class="t" style="left:129px;top:3px;font-size:13px;color:#bbbbbb;transform:scaleX(1.1047)">munmap()<span style="color:#808080"> ()</span></div></div>
<div class="t" style="left:239.00px;top:155px;font-size:13px;color:#bbbbbb;transform:scaleX(1.1061)">14,612,554</div>
<div class="t" style="left:334.75px;top:155px;font-size:13px;color:#bbbbbb;transform-origin:100% 0;transform:scaleX(1.1061)">70.82</div>
<div class="t" style="left:442.07px;top:155px;font-size:13px;color:#bbbbbb;transform-origin:100% 0;transform:scaleX(1.1058)">0</div>
<div class="t" style="left:483.99px;top:155px;font-size:13px;color:#bbbbbb;transform-origin:100% 0;transform:scaleX(1.1062)">0.00</div>
<div class="t" style="left:521.00px;top:155px;font-size:13px;color:#bbbbbb;transform:scaleX(1.1061)">14,612,554</div>
<div class="t" style="left:618.25px;top:155px;font-size:13px;color:#bbbbbb;transform-origin:100% 0;transform:scaleX(1.1061)">70.82</div>
<div class="a" style="left:128px;top:173px;width:14px;height:14px;border-radius:50%;background:#bc6f7e"></div>
<div class="t" style="left:128px;top:176px;width:14px;text-align:center;font-size:10px;color:#2f2326">m</div>
<div class="a" style="left:0;top:171px;width:237px;height:19px;overflow:hidden"><div class="t" style="left:147px;top:3px;font-size:13px;color:#d8d8d8;transform:scaleX(1.1374)">&lt;&lt;native code&gt;&gt;()<span style="color:#808080"> ()</span></div></div>
<div class="t" style="left:239.00px;top:174px;font-size:13px;color:#d8d8d8;transform:scaleX(1.1061)">14,612,554</div>
<div class="t" style="left:334.75px;top:174px;font-size:13px;color:#d8d8d8;transform-origin:100% 0;transform:scaleX(1.1061)">70.82</div>
<div class="t" style="left:379.00px;top:174px;font-size:13px;color:#d8d8d8;transform:scaleX(1.1061)">14,612,554</div>
<div class="t" style="left:476.75px;top:174px;font-size:13px;color:#d8d8d8;transform-origin:100% 0;transform:scaleX(1.1061)">70.82</div>
<div class="t" style="left:584.07px;top:174px;font-size:13px;color:#d8d8d8;transform-origin:100% 0;transform:scaleX(1.1058)">0</div>
<div class="t" style="left:625.49px;top:174px;font-size:13px;color:#d8d8d8;transform-origin:100% 0;transform:scaleX(1.1062)">0.00</div>
<div class="a" style="left:20px;top:192px;width:14px;height:14px;border-radius:50%;background:#bc6f7e"></div>
<div class="t" style="left:20px;top:195px;width:14px;text-align:center;font-size:10px;color:#2f2326">m</div>
<svg class="a" style="left:3px;top:194px" width="7" height="11"><polyline points="1,1 5.5,5.5 1,10" fill="none" stroke="#aaaaaa" stroke-width="1.4"/></svg>
<div class="a" style="left:0;top:190px;width:237px;height:19px;overflow:hidden"><div class="t" style="left:39px;top:3px;font-size:13px;color:#bbbbbb;transform:scaleX(1.0615)">run()<span style="color:#808080"> (java.lang.Thread)</span></div></div>
<div class="t" style="left:248.84px;top:193px;font-size:13px;color:#bbbbbb;transform-origin:100% 0;transform:scaleX(1.1061)">5,929,591</div>
<div class="t" style="left:334.75px;top:193px;font-size:13px;color:#bbbbbb;transform-origin:100% 0;transform:scaleX(1.1061)">28.74</div>
<div class="t" style="left:442.07px;top:193px;font-size:13px;color:#bbbbbb;transform-origin:100% 0;transform:scaleX(1.1058)">0</div>
<div class="t" style="left:483.99px;top:193px;font-size:13px;color:#bbbbbb;transform-origin:100% 0;transform:scaleX(1.1062)">0.00</div>
<div class="t" style="left:533.44px;top:193px;font-size:13px;color:#bbbbbb;transform-origin:100% 0;transform:scaleX(1.1061)">5,929,591</div>
<div class="t" style="left:618.25px;top:193px;font-size:13px;color:#bbbbbb;transform-origin:100% 0;transform:scaleX(1.1061)">28.74</div>
<div class="a" style="left:20px;top:211px;width:14px;height:14px;border-radius:50%;background:#bc6f7e"></div>
<div class="t" style="left:20px;top:214px;width:14px;text-align:center;font-size:10px;color:#2f2326">m</div>
<svg class="a" style="left:3px;top:213px" width="7" height="11"><polyline points="1,1 5.5,5.5 1,10" fill="none" stroke="#aaaaaa" stroke-width="1.4"/></svg>
<div class="a" style="left:0;top:209px;width:237px;height:19px;overflow:hidden"><div class="t" style="left:39px;top:3px;font-size:13px;color:#bbbbbb;transform:scaleX(1.0313)">__init_additional_stacks()<span style="color:#808080"> ()</span></div></div>
<div class="t" style="left:285.00px;top:212px;font-size:13px;color:#bbbbbb;transform-origin:100% 0;transform:scaleX(1.1058)">931</div>
<div class="t" style="left:341.99px;top:212px;font-size:13px;color:#bbbbbb;transform-origin:100% 0;transform:scaleX(1.1062)">0.00</div>
<div class="t" style="left:442.07px;top:212px;font-size:13px;color:#bbbbbb;transform-origin:100% 0;transform:scaleX(1.1058)">0</div>
<div class="t" style="left:483.99px;top:212px;font-size:13px;color:#bbbbbb;transform-origin:100% 0;transform:scaleX(1.1062)">0.00</div>
<div class="t" style="left:569.60px;top:212px;font-size:13px;color:#bbbbbb;transform-origin:100% 0;transform:scaleX(1.1058)">931</div>
<div class="t" style="left:625.49px;top:212px;font-size:13px;color:#bbbbbb;transform-origin:100% 0;transform:scaleX(1.1062)">0.00</div>
<div class="a" style="left:20px;top:230px;width:14px;height:14px;border-radius:50%;background:#bc6f7e"></div>
<div class="t" style="left:20px;top:233px;width:14px;text-align:center;font-size:10px;color:#2f2326">m</div>
<svg class="a" style="left:3px;top:232px" width="7" height="11"><polyline points="1,1 5.5,5.5 1,10" fill="none" stroke="#aaaaaa" stroke-width="1.4"/></svg>
<div class="a" style="left:0;top:228px;width:237px;height:19px;overflow:hidden"><div class="t" style="left:39px;top:3px;font-size:13px;color:#bbbbbb;transform:scaleX(1.1432)">prctl()<span style="color:#808080"> ()</span></div></div>
<div class="t" style="left:285.00px;top:231px;font-size:13px;color:#bbbbbb;transform-origin:100% 0;transform:scaleX(1.1058)">624</div>
<div class="t" style="left:341.99px;top:231px;font-size:13px;color:#bbbbbb;transform-origin:100% 0;transform:scaleX(1.1062)">0.00</div>
<div class="t" style="left:442.07px;top:231px;font-size:13px;color:#bbbbbb;transform-origin:100% 0;transform:scaleX(1.1058)">0</div>
<div class="t" style="left:483.99px;top:231px;font-size:13px;color:#bbbbbb;transform-origin:100% 0;transform:scaleX(1.1062)">0.00</div>
<div class="t" style="left:569.60px;top:231px;font-size:13px;color:#bbbbbb;transform-origin:100% 0;transform:scaleX(1.1058)">624</div>
<div class="t" style="left:625.49px;top:231px;font-size:13px;color:#bbbbbb;transform-origin:100% 0;transform:scaleX(1.1062)">0.00</div>
<div class="a" style="left:0;top:247px;width:237px;height:19px;overflow:hidden"><div class="t" style="left:2px;top:3px;font-size:13px;color:#bbbbbb;transform:scaleX(1.0565)">doComputation()<span style="color:#808080"> (android.com.java.profilertester.taskcategory.CpuTaskCategory)</span></div></div>
<div class="t" style="left:266.92px;top:250px;font-size:13px;color:#bbbbbb;transform-origin:100% 0;transform:scaleX(1.1060)">54,453</div>
<div class="t" style="left:341.99px;top:250px;font-size:13px;color:#bbbbbb;transform-origin:100% 0;transform:scaleX(1.1062)">0.26</div>
<div class="t" style="left:442.07px;top:250px;font-size:13px;color:#bbbbbb;transform-origin:100% 0;transform:scaleX(1.1058)">0</div>
<div class="t" style="left:483.99px;top:250px;font-size:13px;color:#bbbbbb;transform-origin:100% 0;transform:scaleX(1.1062)">0.00</div>
<div class="t" style="left:551.52px;top:250px;font-size:13px;color:#bbbbbb;transform-origin:100% 0;transform:scaleX(1.1060)">54,453</div>
<div class="t" style="left:625.49px;top:250px;font-size:13px;color:#bbbbbb;transform-origin:100% 0;transform:scaleX(1.1062)">0.26</div>
<div class="a" style="left:0;top:266px;width:237px;height:19px;overflow:hidden"><div class="t" style="left:2px;top:3px;font-size:13px;color:#bbbbbb;transform:scaleX(1.0729)">classes2.dex+0x347c8()<span style="color:#808080"> ()</span></div></div>
<div class="t" style="left:266.92px;top:269px;font-size:13px;color:#bbbbbb;transform-origin:100% 0;transform:scaleX(1.1060)">34,316</div>
<div class="t" style="left:341.99px;top:269px;font-size:13px;color:#bbbbbb;transform-origin:100% 0;transform:scaleX(1.1062)">0.17</div>
<div class="t" style="left:442.07px;top:269px;font-size:13px;color:#bbbbbb;transform-origin:100% 0;transform:scaleX(1.1058)">0</div>
<div class="t" style="left:483.99px;top:269px;font-size:13px;color:#bbbbbb;transform-origin:100% 0;transform:scaleX(1.1062)">0.00</div>
<div class="t" style="left:551.52px;top:269px;font-size:13px;color:#bbbbbb;transform-origin:100% 0;transform:scaleX(1.1060)">34,316</div>
<div class="t" style="left:625.49px;top:269px;font-size:13px;color:#bbbbbb;transform-origin:100% 0;transform:scaleX(1.1062)">0.17</div>
<div class="a" style="left:0;top:285px;width:237px;height:19px;overflow:hidden"><div class="t" style="left:2px;top:3px;font-size:13px;color:#bbbbbb;transform:scaleX(1.0766)">clone()<span style="color:#808080"> ()</span></div></div>
<div class="t" style="left:292.23px;top:288px;font-size:13px;color:#bbbbbb;transform-origin:100% 0;transform:scaleX(1.1058)">79</div>
<div class="t" style="left:341.99px;top:288px;font-size:13px;color:#bbbbbb;transform-origin:100% 0;transform:scaleX(1.1062)">0.00</div>
<div class="t" style="left:442.07px;top:288px;font-size:13px;color:#bbbbbb;transform-origin:100% 0;transform:scaleX(1.1058)">0</div>
<div class="t" style="left:483.99px;top:288px;font-size:13px;color:#bbbbbb;transform-origin:100% 0;transform:scaleX(1.1062)">0.00</div>
<div class="t" style="left:576.83px;top:288px;font-size:13px;color:#bbbbbb;transform-origin:100% 0;transform:scaleX(1.1058)">79</div>
<div class="t" style="left:625.49px;top:288px;font-size:13px;color:#bbbbbb;transform-origin:100% 0;transform:scaleX(1.1062)">0.00</div>
</div>
</body></html>
